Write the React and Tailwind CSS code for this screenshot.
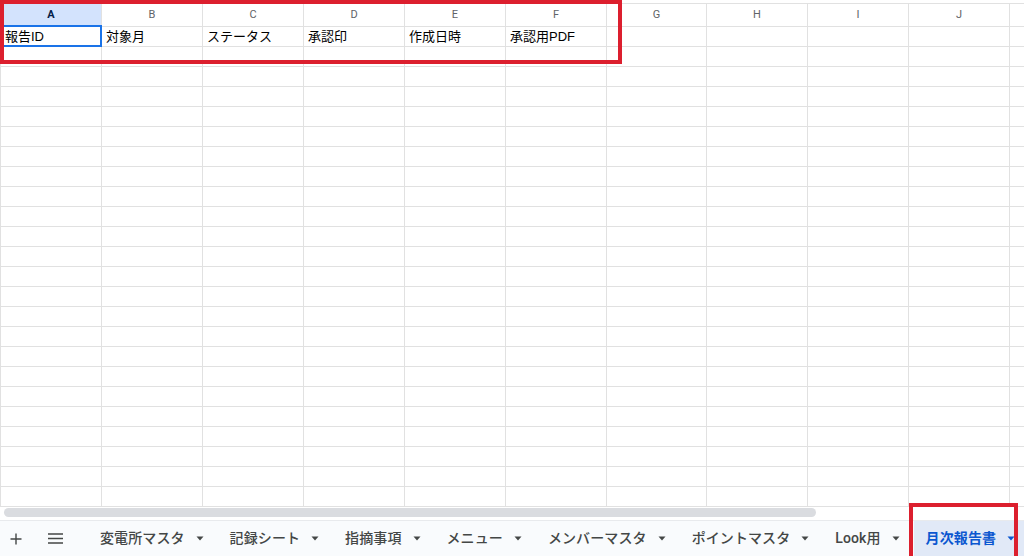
import React from "react";

const cols = [
  { l: "A", w: "w-[101px]", sel: true },
  { l: "B", w: "w-[101px]" },
  { l: "C", w: "w-[101px]" },
  { l: "D", w: "w-[101px]" },
  { l: "E", w: "w-[101px]" },
  { l: "F", w: "w-[101px]" },
  { l: "G", w: "w-[100px]" },
  { l: "H", w: "w-[101px]" },
  { l: "I", w: "w-[101px]" },
  { l: "J", w: "w-[101px]" },
];

const row1 = ["報告ID", "対象月", "ステータス", "承認印", "作成日時", "承認用PDF", "", "", "", ""];

const tabs = ["変電所マスタ", "記録シート", "指摘事項", "メニュー", "メンバーマスタ", "ポイントマスタ", "Look用"];

function Arrow({ color = "#444746" }) {
  return (
    <svg width="8" height="5" viewBox="0 0 8 5" className="shrink-0">
      <path d="M0.5 0.5 L7.5 0.5 L4 4.5 Z" fill={color} />
    </svg>
  );
}

export default function App() {
  const cellFont = { fontFamily: '"Liberation Sans", Arial, "Noto Sans CJK JP", sans-serif' };
  const tabFont = { fontFamily: 'Roboto, "Noto Sans CJK JP", sans-serif' };
  return (
    <div className="relative w-[1024px] h-[556px] overflow-hidden bg-white flex flex-col">
      {/* grid */}
      <div className="pt-[3px]">
        <div className="flex h-[24px] border-y border-l border-[#e1e1e1]">
          {cols.map((c) => (
            <div
              key={c.l}
              className={`${c.w} shrink-0 border-r border-[#e1e1e1] flex items-center justify-center text-[11px] ${
                c.sel ? "bg-[#d3e3fd] text-[#041e49] font-bold" : "text-[#5f6368]"
              }`}
              style={{ fontFamily: 'Roboto, "Liberation Sans", sans-serif' }}
            >
              {c.l}
            </div>
          ))}
          <div className="flex-1" />
        </div>
        {Array.from({ length: 24 }).map((_, r) => (
          <div key={r} className="flex h-[20px] border-b border-l border-[#e1e1e1]">
            {cols.map((c, i) => (
              <div
                key={c.l}
                className={`${c.w} shrink-0 border-r border-[#e1e1e1] flex items-center pl-[4px] text-[13px] text-black whitespace-nowrap overflow-hidden`}
                style={cellFont}
              >
                {r === 0 ? row1[i] : ""}
              </div>
            ))}
            <div className="flex-1" />
          </div>
        ))}
      </div>

      {/* scrollbar */}
      <div className="h-[13px] shrink-0 bg-white pt-[1px] pl-[4px]">
        <div className="h-[9px] w-[812px] rounded-full bg-[#dadce0]" />
      </div>

      {/* tab bar */}
      <div
        className="h-[36px] shrink-0 bg-[#f9fbfd] border-t border-[#e8eaed] flex items-stretch overflow-hidden text-[14px] tracking-[0.1px] text-[#444746] font-medium"
        style={tabFont}
      >
        <div className="w-[32px] shrink-0 flex items-center justify-center">
          <svg width="12" height="12" viewBox="0 0 12 12">
            <path d="M6 0.5 V11.5 M0.5 6 H11.5" stroke="#444746" strokeWidth="1.4" />
          </svg>
        </div>
        <div className="w-[46px] shrink-0 flex items-center justify-center">
          <svg width="15" height="11" viewBox="0 0 15 11">
            <path d="M0 1 H15 M0 5.5 H15 M0 10 H15" stroke="#444746" strokeWidth="1.4" />
          </svg>
        </div>
        <div className="w-[10px] shrink-0" />
        {tabs.map((t) => (
          <div key={t} className="shrink-0 flex items-center pl-[12px] pr-[14px] gap-[11px] whitespace-nowrap">
            <span>{t}</span>
            <Arrow />
          </div>
        ))}
        <div className="shrink-0 flex items-center pl-[12px] pr-[14px] gap-[11px] whitespace-nowrap bg-[#e1e9f7] text-[#0b57d0] font-bold">
          <span>月次報告書</span>
          <Arrow color="#0b57d0" />
        </div>
      </div>

      {/* selection */}
      <div className="absolute left-0 top-[25px] w-[102px] h-[22px] border-2 border-[#1a73e8] pointer-events-none" />

      {/* annotation boxes */}
      <div className="absolute left-0 top-0 w-[622px] h-[64px] border-4 border-[#dc1f2e] pointer-events-none" />
      <div className="absolute left-[909px] top-[503px] w-[109px] h-[60px] border-4 border-[#dc1f2e] pointer-events-none" />
    </div>
  );
}
